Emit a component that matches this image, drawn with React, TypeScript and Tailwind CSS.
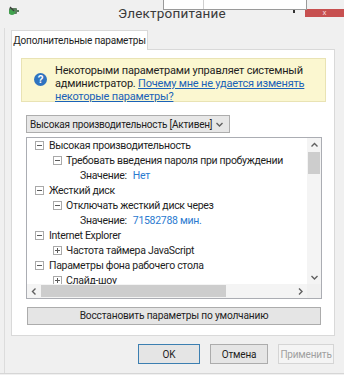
import React from 'react';

type Row = { lvl: number; icon?: 'minus' | 'plus'; text?: string; label?: string; value?: string };

const rows: Row[] = [
  { lvl: 0, icon: 'minus', text: 'Высокая производительность' },
  { lvl: 1, icon: 'minus', text: 'Требовать введения пароля при пробуждении' },
  { lvl: 2, label: 'Значение:', value: 'Нет' },
  { lvl: 0, icon: 'minus', text: 'Жесткий диск' },
  { lvl: 1, icon: 'minus', text: 'Отключать жесткий диск через' },
  { lvl: 2, label: 'Значение:', value: '71582788 мин.' },
  { lvl: 0, icon: 'minus', text: 'Internet Explorer' },
  { lvl: 1, icon: 'plus', text: 'Частота таймера JavaScript' },
  { lvl: 0, icon: 'minus', text: 'Параметры фона рабочего стола' },
  { lvl: 1, icon: 'plus', text: 'Слайд-шоу' },
];

function Toggle({ plus }: { plus?: boolean }) {
  return (
    <svg width="9" height="9" viewBox="0 0 9 9" className="shrink-0">
      <rect x="0.5" y="0.5" width="8" height="8" fill="#fff" stroke="#a9a9a9" />
      <path d="M2 4.5h5" stroke="#5a5a5a" />
      {plus && <path d="M4.5 2v5" stroke="#5a5a5a" />}
    </svg>
  );
}

function Chevron({ dir }: { dir: 'up' | 'down' | 'left' | 'right' }) {
  const d = {
    up: 'M1.5 5.5 L4.5 2.5 L7.5 5.5',
    down: 'M1.5 3 L4.5 6 L7.5 3',
    left: 'M5.5 1.5 L2.5 4.5 L5.5 7.5',
    right: 'M3 1.5 L6 4.5 L3 7.5',
  }[dir];
  return (
    <svg width="9" height="9" viewBox="0 0 9 9" className="shrink-0">
      <path d={d} fill="none" stroke="#606060" strokeWidth="1.4" />
    </svg>
  );
}

function TreeRow({ row }: { row: Row }) {
  if (row.label) {
    return (
      <div className="h-[15px] flex items-center whitespace-nowrap pl-[53px]">
        <span>{row.label}</span>
        <span className="ml-[6px] text-[#2a7ad0]">{row.value}</span>
      </div>
    );
  }
  return (
    <div className={`h-[15px] flex items-center whitespace-nowrap ${row.lvl === 0 ? 'pl-[8px]' : 'pl-[26px]'}`}>
      <Toggle plus={row.icon === 'plus'} />
      <span className={row.lvl === 0 ? 'ml-[5px]' : 'ml-[4px]'}>{row.text}</span>
    </div>
  );
}

export default function App() {
  return (
    <div className="relative w-[344px] h-[375px] overflow-hidden bg-[#f0f0f0] text-[11px] tracking-[-0.2px] text-[#1e1e1e] font-['Roboto',sans-serif] flex flex-col">
      {/* bit of another window over the title bar */}
      <div className="absolute left-[163px] top-0 w-[144px] h-[10px] bg-white border border-t-0 border-[#9a9a9a] flex">
        <div className="w-[40px] border-r border-[#d0d0d0]" />
      </div>

      <div className="h-[28px] shrink-0 grid grid-cols-[1fr_auto_1fr] items-start">
        <div className="pl-[8px] pt-[5px]">
          <svg width="12" height="12" viewBox="0 0 12 12">
            <rect x="1" y="3" width="8" height="6" rx="1" fill="#5b7d5e" />
            <rect x="9" y="5" width="2" height="2" fill="#5b7d5e" />
            <circle cx="4" cy="7" r="3" fill="#3fa34d" />
            <path d="M2 2 L6 6" stroke="#3d3d3d" strokeWidth="1.2" />
          </svg>
        </div>
        <div className="pt-[2px] text-[13.5px] leading-[22px] text-[#3a3a3a] tracking-[0.2px]">Электропитание</div>
        <div className="flex justify-end items-start pt-[9px] gap-[10px]">
          <div className="w-[2px] h-[3px] bg-[#333] mt-[1px]" />
          <div className="w-[39px] h-[8px] bg-[#c75050] flex items-center justify-center text-[8px] leading-none text-[#f4d4d4]">x</div>
        </div>
      </div>

      <div className="pl-[4px] shrink-0">
        <div className="border-l border-[#dcdcdc] pl-[6px] pt-[2px] h-[345px]">
          <div className="relative z-10 w-[137px] h-[20px] -mb-[1px] bg-white border border-b-0 border-[#d9d9d9] flex items-center justify-center whitespace-nowrap text-[10px] tracking-[-0.2px]">
            Дополнительные параметры
          </div>
          <div className="w-[324px] h-[287px] bg-white border border-[#d9d9d9] pl-[9px] pt-[8px]">
            <div className="w-[305px] h-[44px] bg-[#fbf7d0] border border-[#e9e3b4] flex">
              <div className="pl-[12px] pt-[14px]">
                <svg width="13" height="13" viewBox="0 0 13 13">
                  <circle cx="6.5" cy="6.5" r="6.5" fill="#2f74c0" />
                  <text x="6.5" y="10" textAnchor="middle" fontSize="10" fontWeight="bold" fill="#fff" fontFamily="Liberation Sans, sans-serif">?</text>
                </svg>
              </div>
              <div className="pl-[8px] pt-[5px] leading-[13px] whitespace-nowrap">
                <div>Некоторыми параметрами управляет системный</div>
                <div>
                  администратор.{' '}
                  <span className="text-[#1a62b8] underline">Почему мне не удается изменять</span>
                </div>
                <div className="text-[#1a62b8] underline">некоторые параметры?</div>
              </div>
            </div>

            <div className="mt-[13px] ml-[5px] w-[204px] h-[18px] bg-[#e7e7e7] border border-[#adadad] flex items-center justify-between pl-[3px] pr-[5px] whitespace-nowrap text-[10px] tracking-[-0.2px]">
              <span>Высокая производительность [Активен]</span>
              <Chevron dir="down" />
            </div>

            <div className="mt-[4px] ml-[5px] w-[296px] h-[162px] border border-[#abadb3] flex flex-col bg-white text-[10.5px] tracking-[-0.3px]">
              <div className="flex h-[146px]">
                <div className="flex-1 overflow-hidden">
                  {rows.map((r, i) => (
                    <TreeRow key={i} row={r} />
                  ))}
                </div>
                <div className="w-[14px] bg-[#f4f4f4] flex flex-col items-center">
                  <div className="h-[14px] flex items-center justify-center">
                    <Chevron dir="up" />
                  </div>
                  <div className="w-[12px] h-[22px] bg-[#cdcdcd]" />
                  <div className="flex-1" />
                  <div className="h-[14px] flex items-center justify-center">
                    <Chevron dir="down" />
                  </div>
                </div>
              </div>
              <div className="h-[14px] flex">
                <div className="flex-1 bg-[#f4f4f4] flex items-center">
                  <div className="w-[14px] flex justify-center">
                    <Chevron dir="left" />
                  </div>
                  <div className="w-[185px] h-[12px] bg-[#cdcdcd]" />
                  <div className="flex-1" />
                  <div className="w-[14px] flex justify-center">
                    <Chevron dir="right" />
                  </div>
                </div>
                <div className="w-[14px] bg-[#f0f0f0]" />
              </div>
            </div>

            <div className="mt-[8px] ml-[6px] w-[294px] h-[18px] bg-[#e5e5e5] border border-[#acacac] flex items-center justify-center whitespace-nowrap text-[10.2px]">
              Восстановить параметры по умолчанию
            </div>
          </div>

          <div className="mt-[8px] flex justify-end gap-[10px] pr-[10px] text-[10px]">
            <div className="w-[62px] h-[20px] bg-[#e5e5e5] border border-[#3c7fb1] flex items-center justify-center">OK</div>
            <div className="w-[58px] h-[20px] bg-[#e5e5e5] border border-[#acacac] flex items-center justify-center">Отмена</div>
            <div className="w-[56px] h-[20px] bg-[#f4f4f4] border border-[#d5d5d5] flex items-center justify-center text-[#a0a0a0]">Применить</div>
          </div>
        </div>
      </div>
      <div className="h-[1px] shrink-0 bg-[#d6d6d6]" />
    </div>
  );
}
